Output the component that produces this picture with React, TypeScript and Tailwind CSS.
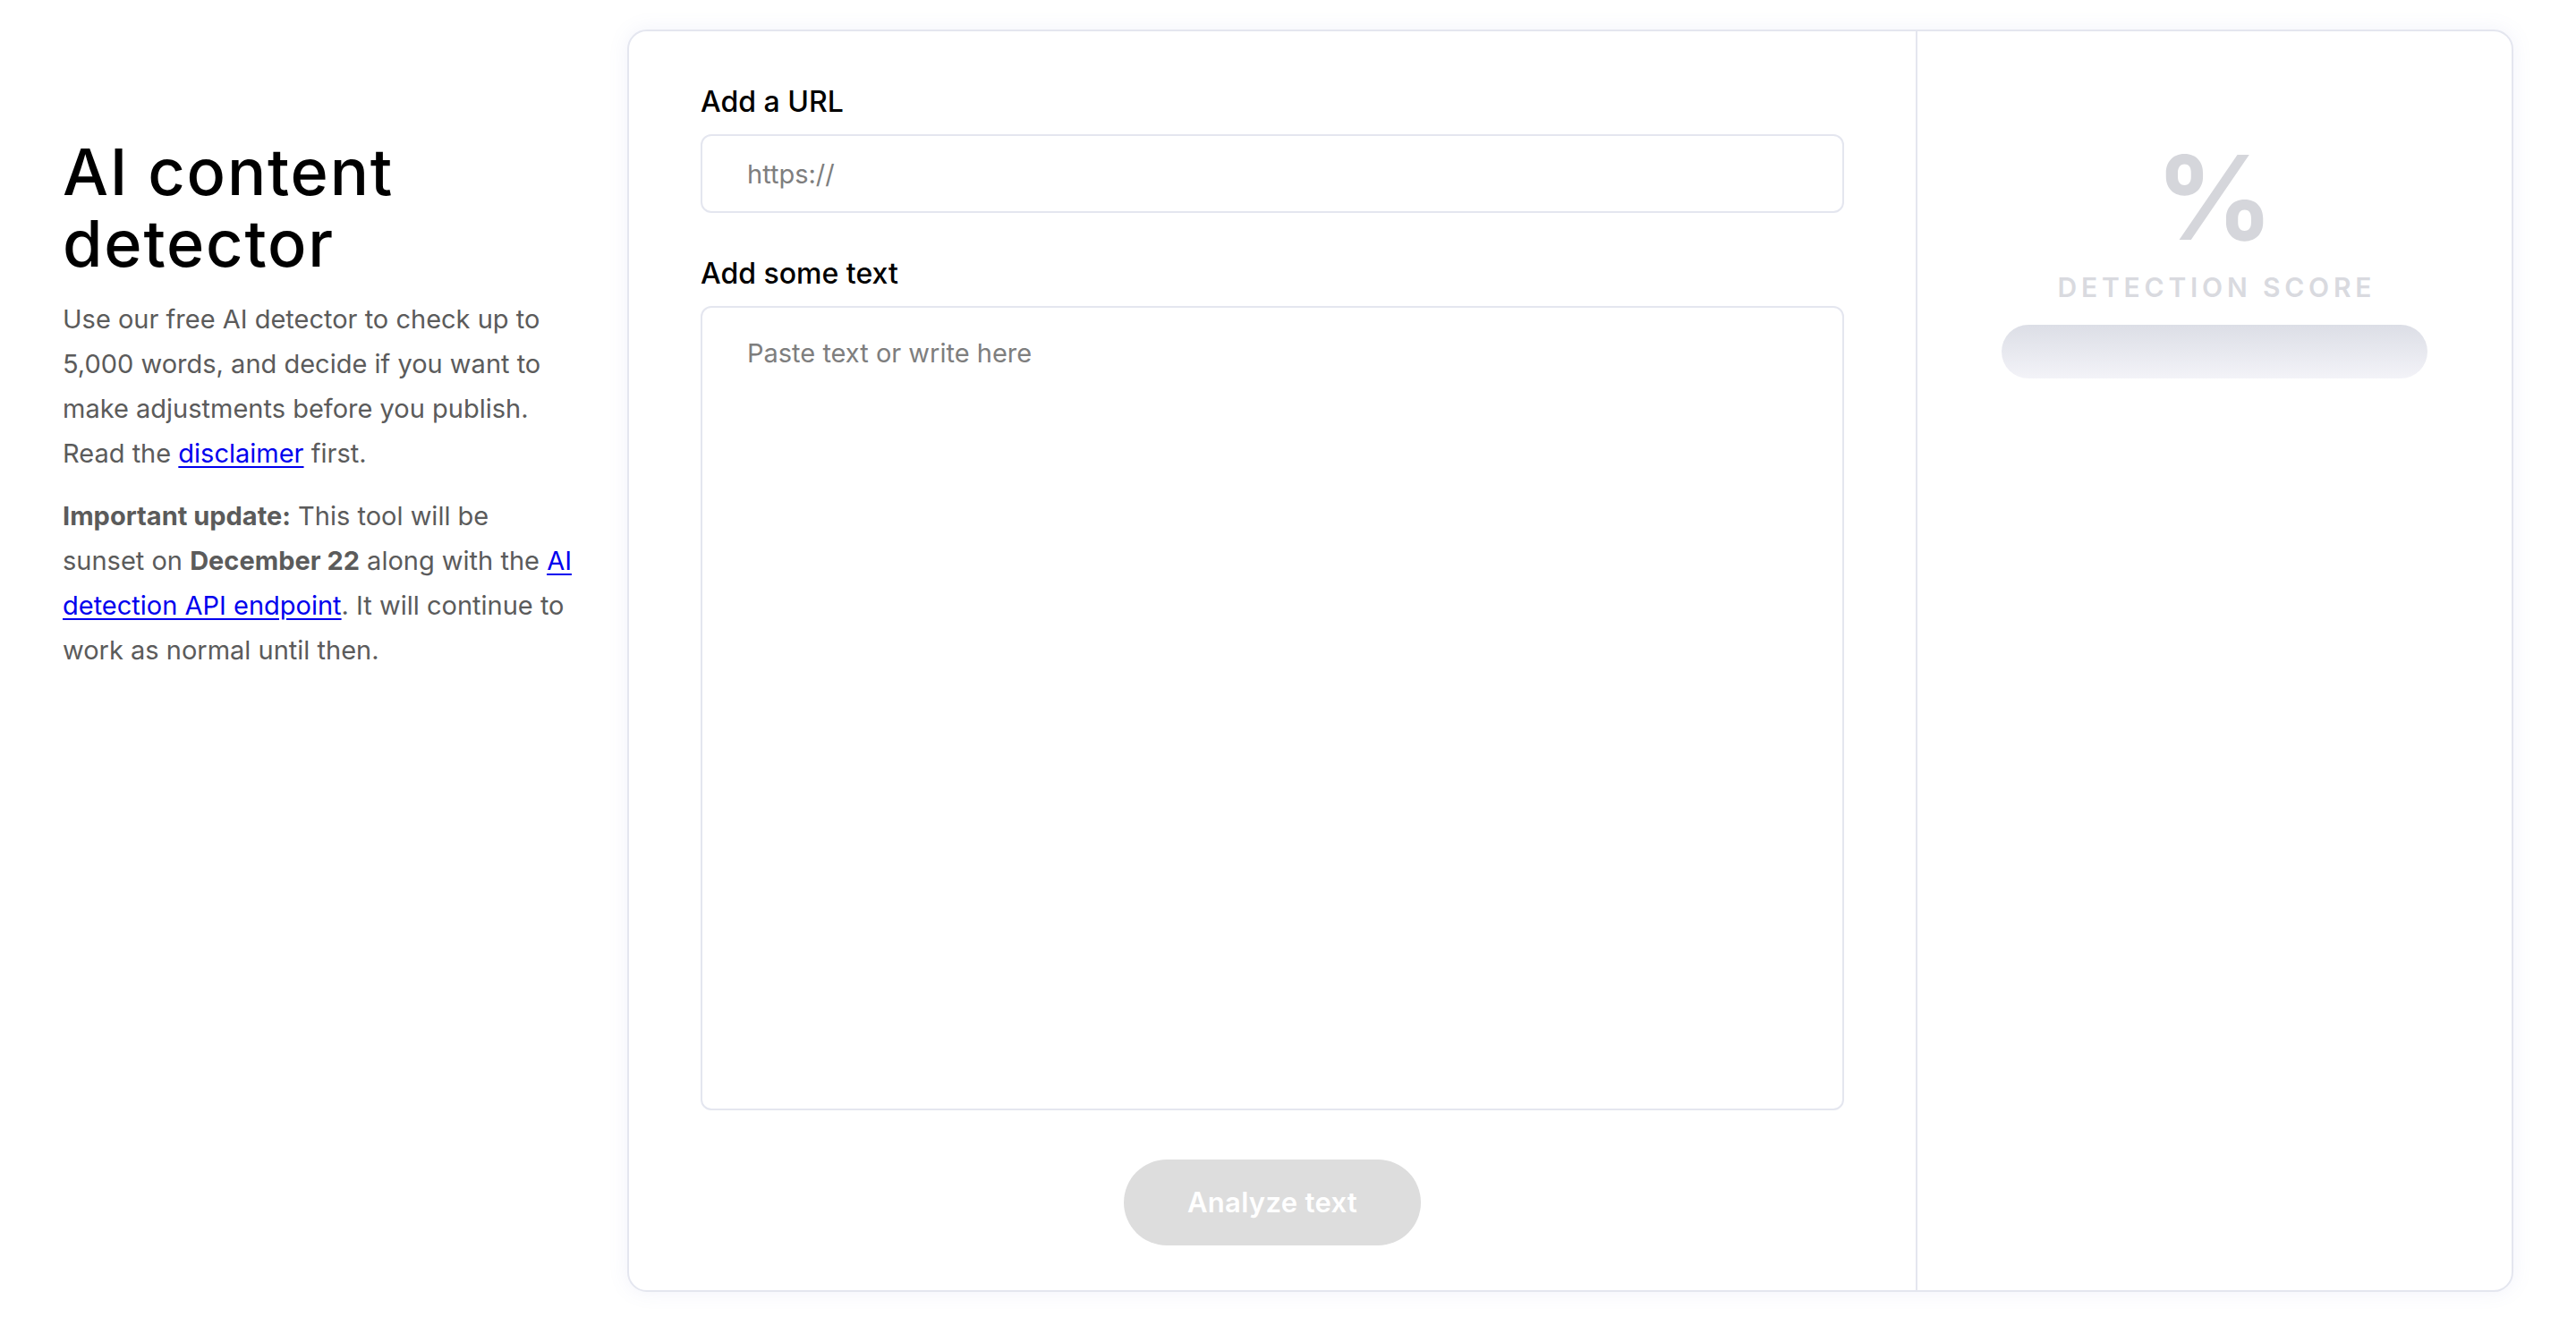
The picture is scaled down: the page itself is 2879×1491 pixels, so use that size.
import { useState } from "react";

export default function App() {
  const [url, setUrl] = useState("");
  const [text, setText] = useState("");

  return (
    <div className="flex min-h-screen items-start bg-white pl-[70px] pr-[70px] pt-[33px] font-['Inter',sans-serif] text-black">
      {/* Intro column */}
      <div className="mr-[63px] mt-[119px] w-[568px] shrink-0">
        <h1 className="text-[72px] font-medium leading-[80px] tracking-[0.025em]">
          AI content
          <br />
          detector
        </h1>
        <p className="mt-[20px] whitespace-nowrap text-[29px] leading-[50px] text-[#5b5b5b]">
          Use our free AI detector to check up to
          <br />
          5,000 words, and decide if you want to
          <br />
          make adjustments before you publish.
          <br />
          Read the{" "}
          <a href="#" className="text-[#0000ee] underline underline-offset-[4px]">
            disclaimer
          </a>{" "}
          first.
        </p>
        <p className="mt-[20px] whitespace-nowrap text-[29px] leading-[50px] text-[#5b5b5b]">
          <strong className="font-bold">Important update:</strong> This tool will be
          <br />
          sunset on <strong className="font-bold">December 22</strong> along with the{" "}
          <a href="#" className="text-[#0000ee] underline underline-offset-[4px]">
            AI
          </a>
          <br />
          <a href="#" className="text-[#0000ee] underline underline-offset-[4px]">
            detection API endpoint
          </a>
          . It will continue to
          <br />
          work as normal until then.
        </p>
      </div>

      {/* Tool card */}
      <div className="flex flex-1 overflow-hidden rounded-[22px] border-2 border-[#e4e6ef] bg-white shadow-[0_0_22px_rgba(120,130,210,0.1)]">
        <div className="flex flex-1 flex-col px-[80px] pb-[50px] pt-[59px]">
          <label className="text-[32px] font-medium leading-[40px]">Add a URL</label>
          <input
            value={url}
            onChange={(e) => setUrl(e.target.value)}
            placeholder="https://"
            className="mt-[16px] h-[88px] rounded-[12px] border-2 border-[#e4e6ef] px-[50px] text-[29px] text-[#333] outline-none placeholder:text-[#7e7e7e]"
          />

          <label className="mt-[48px] text-[32px] font-medium leading-[40px]">
            Add some text
          </label>
          <textarea
            value={text}
            onChange={(e) => setText(e.target.value)}
            placeholder="Paste text or write here"
            className="mt-[16px] h-[899px] resize-none rounded-[12px] border-2 border-[#e4e6ef] px-[50px] pt-[29px] text-[29px] leading-[44px] text-[#333] outline-none placeholder:text-[#7e7e7e]"
          />

          <button
            type="button"
            disabled
            className="mx-auto mt-[55px] h-[96px] w-[332px] rounded-full bg-[#dddddd] text-[31px] font-semibold tracking-[0.01em] text-white"
          >
            Analyze text
          </button>
        </div>

        {/* Score panel */}
        <div className="flex w-[666px] shrink-0 flex-col items-center border-l-2 border-[#e4e6ef] pt-[121px]">
          <span className="text-[130px] font-bold leading-none text-[#d5d6db]">%</span>
          <span className="mt-[17px] pl-[0.16em] text-[30px] font-semibold leading-[36px] tracking-[0.16em] text-[#d9dadf]">
            DETECTION SCORE
          </span>
          <div className="mt-[24px] h-[60px] w-[476px] rounded-full bg-gradient-to-b from-[#dcdee6] to-[#f3f3f8]" />
        </div>
      </div>
    </div>
  );
}
